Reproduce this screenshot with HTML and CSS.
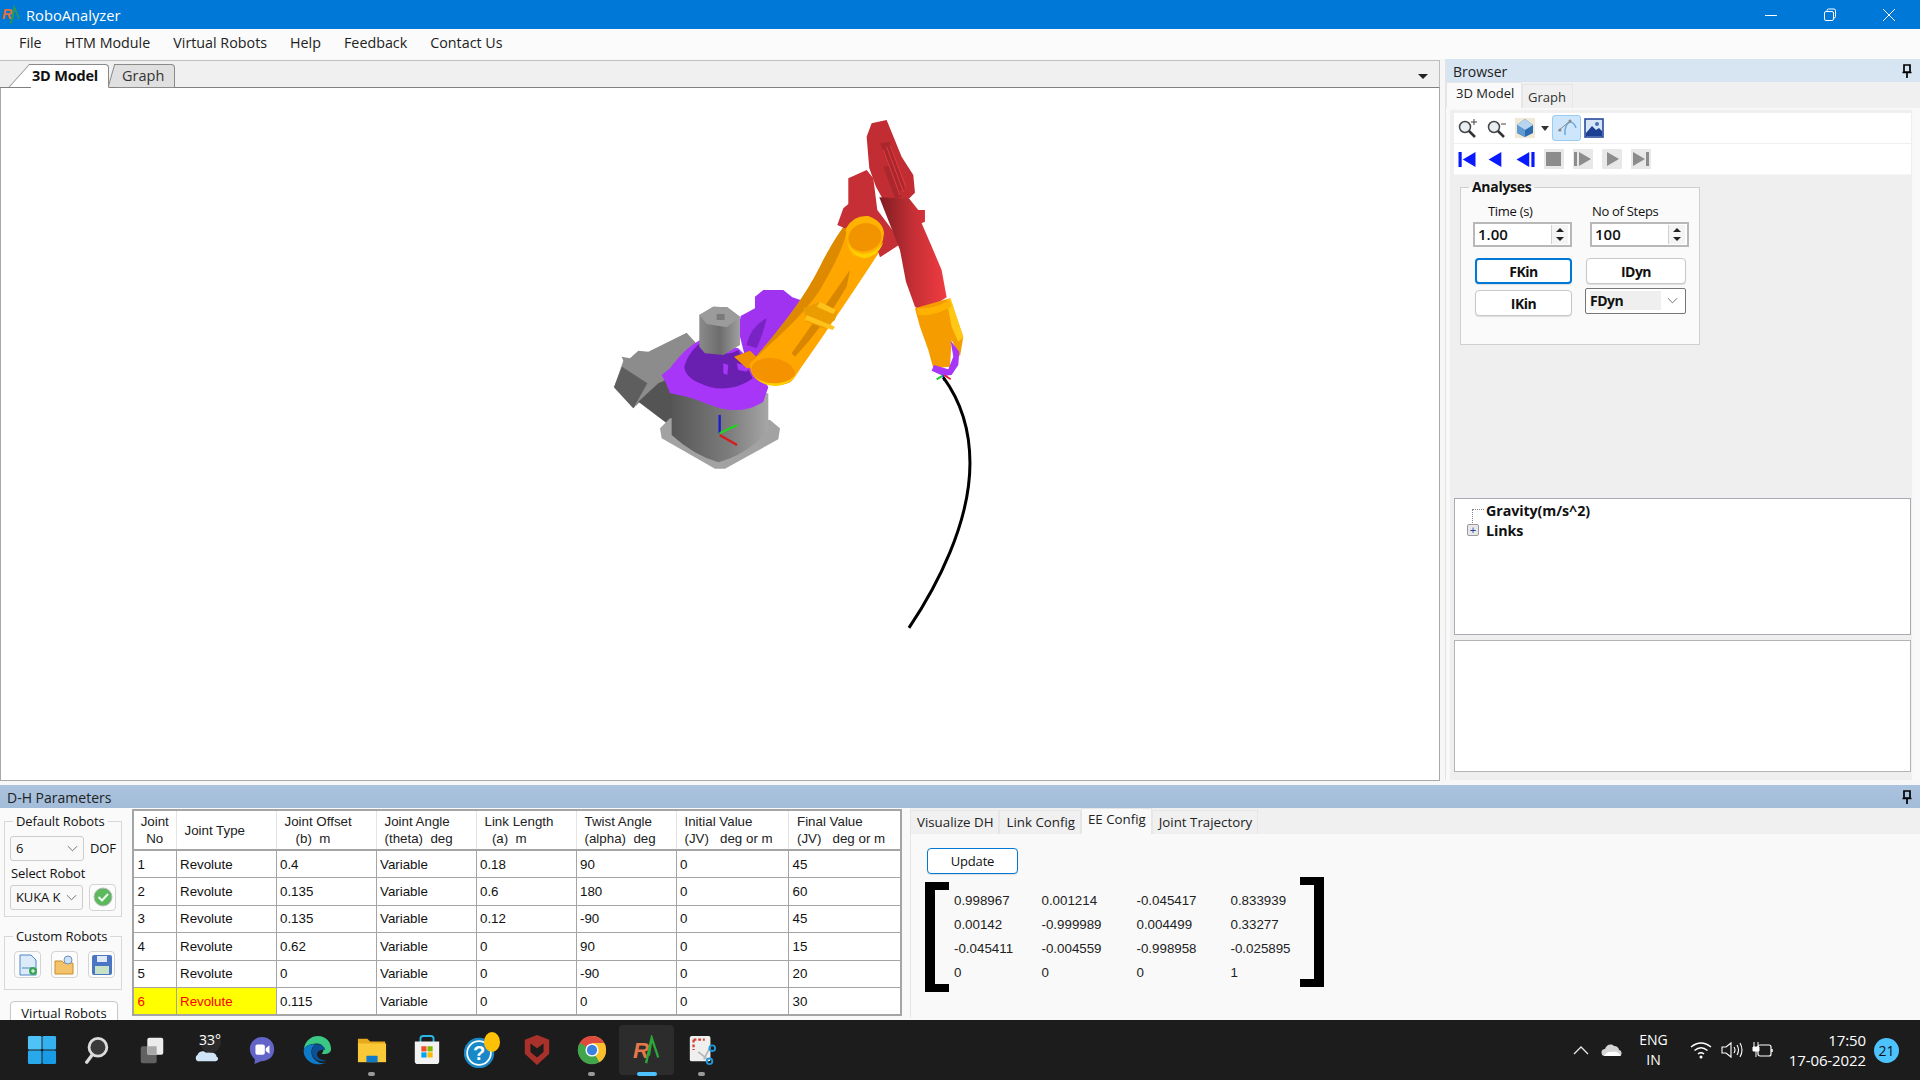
FILE: index.html
```html
<!DOCTYPE html>
<html lang="en">
<head>
    <meta charset="UTF-8">
    <title>RoboAnalyzer</title>
    <link rel="stylesheet" href="styles.css">
</head>
<body>
    <header class="titlebar">
        <svg class="app-icon" viewBox="0 0 20 20">
            <text x="0" y="14" class="ra-r">R</text>
            <path d="M9 19 L13 2 L18 14 M13 2 L11 15" fill="none" stroke="#2e9e3a" stroke-width="1.6"/>
        </svg>
        <span class="app-name">RoboAnalyzer</span>
        <div class="win-controls">
            <svg width="14" height="14" viewBox="0 0 14 14"><path d="M1 7.5H13" stroke="#fff"/></svg>
            <svg width="14" height="14" viewBox="0 0 14 14"><rect x="1.5" y="3.5" width="9" height="9" rx="1.5" fill="none" stroke="#fff"/><path d="M4 3V2.5A1.5 1.5 0 0 1 5.5 1H11A1.5 1.5 0 0 1 12.5 2.5V8.500A1.500 1.500 0 0 1 11 10" fill="none" stroke="#fff"/></svg>
            <svg width="14" height="14" viewBox="0 0 14 14"><path d="M1 1L13 13M13 1L1 13" stroke="#fff"/></svg>
        </div>
    </header>

    <nav class="menubar">
        <span>File</span>
        <span>HTM Module</span>
        <span>Virtual Robots</span>
        <span>Help</span>
        <span>Feedback</span>
        <span>Contact Us</span>
    </nav>

    <div class="workspace">
        <main class="main-view">
            <div class="doc-tabs">
                <span class="doc-tab active">3D Model</span>
                <span class="doc-tab">Graph</span>
                <span class="doc-caret"></span>
            </div>
            <div class="viewport">
                <svg class="scene" viewBox="0 0 1438 690">
                    <defs>
                        <linearGradient id="baseGrey" x1="0" x2="1" y1="0" y2="0">
                            <stop offset="0" stop-color="#565656"/>
                            <stop offset="0.6" stop-color="#7d7d7d"/>
                            <stop offset="1" stop-color="#a6a6a6"/>
                        </linearGradient>
                        <linearGradient id="redArm" x1="0" x2="1" y1="0" y2="0">
                            <stop offset="0" stop-color="#7e1d22"/>
                            <stop offset="0.5" stop-color="#c52f35"/>
                            <stop offset="1" stop-color="#f03c42"/>
                        </linearGradient>
                        <linearGradient id="motorGrey" x1="0" x2="1" y1="0" y2="0">
                            <stop offset="0" stop-color="#8a8a8a"/>
                            <stop offset="0.5" stop-color="#6d6d6d"/>
                            <stop offset="1" stop-color="#a0a0a0"/>
                        </linearGradient>
                    </defs>
                    <g transform="translate(589 11) scale(0.3333)">
                        <!-- gearbox behind the base -->
                        <path d="M72 862L100 782 95 770 120 775 145 752 175 755 290 698 332 745 330 800 215 845 130 925Z" fill="#8c8c8c"/>
                        <path d="M72 862L96 800 172 850 130 925Z" fill="#5e5e5e"/>
                        <path d="M145 905L205 850 330 790 340 900 250 985Z" fill="#545454"/>
                        <!-- base -->
                        <path d="M210 985L240 955 540 960 570 985 565 1018 405 1106 375 1106 215 1015Z" fill="#a2a2a2"/>
                        <path d="M245 880V1005Q310 1065 385 1087 480 1060 535 990V880Z" fill="url(#baseGrey)"/>
                        <!-- purple shoulder -->
                        <path d="M495 590L520 570 580 570 607 592 660 610 590 780 470 790 445 690 452 648 495 625Z" fill="#a033f0"/>
                        <path d="M470 735Q480 680 530 655 520 700 500 745Z" fill="#7a23c4"/>
                        <path d="M215 825L240 805C265 770 295 740 330 720L445 745 500 800 535 862 520 905C490 925 460 932 420 930 380 925 350 910 320 900 290 888 262 885 240 880L228 850Z" fill="#a836f8"/>
                        <path d="M283 802C290 770 310 745 332 728 370 765 410 770 445 750L488 835C440 870 380 875 330 850 300 838 285 820 283 802Z" fill="#691fb0"/>
                        <path d="M400 790L415 795 412 825 400 820ZM440 790L480 800 470 815 445 810Z" fill="#a836f8"/>
                        <!-- motor -->
                        <path d="M328 645L370 620 412 622 450 650V735L400 765 345 760 328 740Z" fill="url(#motorGrey)"/>
                        <path d="M328 645L370 620 412 622 450 650 410 682 350 672Z" fill="#9b9b9b"/>
                        <rect x="380" y="642" width="24" height="18" fill="#7a7a7a"/>
                        <!-- lower orange link -->
                        <path d="M432 770L480 752 530 800 470 805Z" fill="#f09000"/>
                        <path d="M480 790C560 700 640 600 690 500 720 440 745 400 785 350L880 390 872 450C800 560 720 680 632 805 600 860 540 858 510 845 490 835 478 815 480 790Z" fill="#ffa600"/>
                        <path d="M480 790C560 700 640 600 690 500 720 440 745 400 772 365 775 420 730 500 690 570 630 660 550 720 480 790Z" fill="#dd8a00"/>
                        <path d="M605 760Q690 640 780 510L770 560Q700 680 615 770Z" fill="#d98600"/>
                        <path d="M640 625L690 605 742 632 735 660 700 685 650 665Z" fill="#eb9c00"/>
                        <path d="M690 605L738 630 730 642 680 620ZM650 645L735 680 728 690 645 660Z" fill="#ffc21a"/>
                        <ellipse cx="550" cy="815" rx="66" ry="40" transform="rotate(10 550 815)" fill="#f59200"/>
                        <path d="M490 822Q510 858 560 858 610 850 625 815 600 850 550 850 505 848 490 822Z" fill="#ffd000"/>
                        <!-- red shoulder and forearm -->
                        <path d="M742 375L760 325 775 312V235L830 210 850 235 862 330 900 380 935 430 870 472 860 440 800 400Z" fill="#c52f35"/>
                        <path d="M830 110L845 70 890 60 935 170 970 225 975 278 955 298 960 320 880 300 858 260 838 205 835 170Z" fill="#c22d33"/>
                        <path d="M868 292L958 296 985 330 1005 330 1005 365 995 370 1022 432 1055 510 1070 592 1000 636 975 620 948 545 930 450Z" fill="url(#redArm)"/>
                        <path d="M870 130L900 125 945 265 925 275ZM880 200L905 195 935 290 915 295Z" fill="#a9282e"/>
                        <path d="M880 150L930 285M890 140L940 275M900 135L948 262" stroke="#e5393f" stroke-width="3"/>
                        <!-- orange link top joint -->
                        <path d="M768 385Q790 345 835 348 880 365 882 400 880 440 850 465L790 470Q765 430 768 385Z" fill="#ffb300"/>
                        <ellipse cx="825" cy="412" rx="50" ry="42" transform="rotate(-15 825 412)" fill="#f29400"/>
                        <path d="M772 430Q785 470 825 475 870 465 880 425 860 460 820 462 790 460 772 430Z" fill="#ffd000"/>
                        <!-- wrist -->
                        <path d="M975 625L1080 595 1120 710 1110 770 1085 720 1080 800 1030 805 1015 750 990 680Z" fill="#f59c00"/>
                        <path d="M1070 600L1082 595 1120 712 1105 725 1085 680Z" fill="#ffc814"/>
                        <path d="M980 625Q1030 630 1078 600L1085 620Q1030 650 985 645Z" fill="#ffb300"/>
                        <path d="M1025 812L1032 795 1075 808 1090 770 1082 722 1108 755 1105 795 1085 825 1060 828Z" fill="#a836f8"/>
                        <path d="M1040 838L1060 826" stroke="#19d62e" stroke-width="6"/>
                        <path d="M1060 826L1062 842" stroke="#1a1aff" stroke-width="5"/>
                        <path d="M1064 826L1082 838" stroke="#e8141e" stroke-width="5"/>
                        <!-- end effector path -->
                        <path d="M1060 832C1110 900 1140 990 1140 1090 1140 1270 1040 1460 957 1584" fill="none" stroke="#000" stroke-width="9"/>
                        <!-- base frame -->
                        <path d="M389 1000V945" stroke="#1a1ad8" stroke-width="7"/>
                        <path d="M389 1000L442 975" stroke="#1ed61e" stroke-width="7"/>
                        <path d="M389 1005L441 1035" stroke="#d81a1a" stroke-width="7"/>
                    </g>
                </svg>
            </div>
        </main>

        <aside class="browser">
            <div class="dock-title light">
                <span>Browser</span>
                <svg class="pin" viewBox="0 0 12 14"><path d="M3 1H9V8H3ZM1.500 8.500H10.500M6 9V14" fill="none" stroke="#000" stroke-width="1.700"/></svg>
            </div>
            <div class="side-tabs">
                <span class="side-tab active">3D Model</span>
                <span class="side-tab">Graph</span>
            </div>
            <div class="side-body">
                <div class="tool-row">
                    <svg class="tool" viewBox="0 0 20 20"><circle cx="8" cy="9" r="5.500" fill="#e8eef2" stroke="#444" stroke-width="1.500"/><path d="M12 13L18 19" stroke="#333" stroke-width="2.500"/><path d="M17 1V7M14 4H20" stroke="#444"/></svg>
                    <svg class="tool" viewBox="0 0 20 20"><circle cx="8" cy="9" r="5.500" fill="#e8eef2" stroke="#444" stroke-width="1.500"/><path d="M12 13L18 19" stroke="#333" stroke-width="2.500"/><path d="M15 6H20" stroke="#444"/></svg>
                    <svg class="tool cube" viewBox="0 0 20 20"><rect width="20" height="20" fill="#efe9d6"/><path d="M10 1L18 7V15L10 19 2 15V7Z" fill="#2b6cb0"/><path d="M10 1L18 7 10 12 2 7Z" fill="#b8d4ee"/><path d="M2 7L10 12V19L2 15Z" fill="#5f9ad2"/></svg>
                    <span class="tool-caret"></span>
                    <span class="tool-on">
                        <svg class="tool" viewBox="0 0 20 20"><path d="M8 17C7 10 10 5 13 4 16 4 18 7 19 10" fill="none" stroke="#6fa8dc" stroke-width="1.500"/><path d="M1 13L13 3" stroke="#8a8a8a"/><circle cx="13" cy="3" r="1.500" fill="#888"/><circle cx="3" cy="12" r="1.500" fill="#888"/></svg>
                    </span>
                    <svg class="tool" viewBox="0 0 20 20"><rect x="1" y="1" width="18" height="18" fill="#d7e6f6" stroke="#1c3f94" stroke-width="1.500"/><circle cx="13" cy="6" r="2" fill="#4b6fb5"/><path d="M2 15L8 8 12 12 15 10 18 13V18H2Z" fill="#1c3f94"/></svg>
                </div>
                <div class="tool-row media">
                    <svg class="tool" viewBox="0 0 18 16"><path d="M1 1H4V15H1ZM17 1V15L5 8Z" fill="#0a1aff"/></svg>
                    <svg class="tool" viewBox="0 0 18 16"><path d="M14 1V15L2 8Z" fill="#0a1aff"/></svg>
                    <svg class="tool" viewBox="0 0 18 16"><path d="M13 1V15L1 8ZM15 1H18V15H15Z" fill="#0a1aff"/></svg>
                    <svg class="tool off" viewBox="0 0 20 20"><rect width="20" height="20" fill="#e8e8e8"/><rect x="2" y="3" width="15" height="14" fill="#8c8c8c"/></svg>
                    <svg class="tool off" viewBox="0 0 20 20"><rect width="20" height="20" fill="#e8e8e8"/><path d="M1 3H4V17H1ZM6 3V17L18 10Z" fill="#8c8c8c"/></svg>
                    <svg class="tool off" viewBox="0 0 20 20"><rect width="20" height="20" fill="#e8e8e8"/><path d="M5 3V17L17 10Z" fill="#8c8c8c"/></svg>
                    <svg class="tool off" viewBox="0 0 20 20"><rect width="20" height="20" fill="#e8e8e8"/><path d="M2 3V17L14 10ZM15 3H18V17H15Z" fill="#8c8c8c"/></svg>
                </div>

                <fieldset class="analyses">
                    <legend>Analyses</legend>
                    <div class="spin-grid">
                        <div class="spin-field">
                            <label class="time-label">Time (s)</label>
                            <div class="spin"><span>1.00</span><i class="spin-btns"><b class="up"></b><b class="down"></b></i></div>
                        </div>
                        <div class="spin-field">
                            <label class="steps-label">No of Steps</label>
                            <div class="spin"><span>100</span><i class="spin-btns"><b class="up"></b><b class="down"></b></i></div>
                        </div>
                    </div>
                    <div class="run-grid">
                        <button class="btn bold focus">FKin</button>
                        <button class="btn bold">IDyn</button>
                        <button class="btn bold">IKin</button>
                        <div class="fdyn"><span>FDyn</span><svg class="chev" viewBox="0 0 12 7"><path d="M1 1L6 6 11 1" fill="none" stroke="#666"/></svg></div>
                    </div>
                </fieldset>

                <div class="spacer"></div>

                <div class="tree">
                    <div class="tree-row"><span class="tree-line"></span>Gravity(m/s^2)</div>
                    <div class="tree-row"><span class="tree-plus">+</span>Links</div>
                </div>
                <div class="log"></div>
            </div>
        </aside>
    </div>

    <section class="dh-dock">
        <div class="dock-title dark">
            <span>D-H Parameters</span>
            <svg class="pin" viewBox="0 0 12 14"><path d="M3 1H9V8H3ZM1.500 8.500H10.500M6 9V14" fill="none" stroke="#000" stroke-width="1.700"/></svg>
        </div>
        <div class="dh-body">
            <div class="robot-col">
                <fieldset class="group default-robots">
                    <legend>Default Robots</legend>
                    <div class="form-row first">
                        <div class="combo"><span>6</span><svg class="chev" viewBox="0 0 12 7"><path d="M1 1L6 6 11 1" fill="none" stroke="#666"/></svg></div>
                        <span class="dof">DOF</span>
                    </div>
                    <div class="select-label">Select Robot</div>
                    <div class="form-row">
                        <div class="combo"><span>KUKA K</span><svg class="chev" viewBox="0 0 12 7"><path d="M1 1L6 6 11 1" fill="none" stroke="#666"/></svg></div>
                        <button class="icon-btn">
                            <svg viewBox="0 0 20 20" width="20" height="20"><circle cx="10" cy="10" r="9" fill="#5cb85c" stroke="#bbb"/><path d="M5.500 10L9 13.500 15 7" fill="none" stroke="#e8f8e8" stroke-width="2.200"/></svg>
                        </button>
                    </div>
                </fieldset>
                <fieldset class="group custom-robots">
                    <legend>Custom Robots</legend>
                    <div class="custom-row">
                        <button class="icon-btn">
                            <svg viewBox="0 0 22 22" width="22" height="22"><path d="M3 1H14L19 6V21H3Z" fill="#dcebfa" stroke="#4a86c8"/><path d="M5 14H15" stroke="#4a86c8"/><circle cx="16" cy="17" r="4" fill="#3aa655"/><path d="M14 17H18M16 15V19" stroke="#fff"/></svg>
                        </button>
                        <button class="icon-btn">
                            <svg viewBox="0 0 22 22" width="22" height="22"><path d="M1 7H8L10 9H19V20H1Z" fill="#f4c26b" stroke="#c98f2c"/><circle cx="14" cy="6" r="4" fill="#cfe2f5" stroke="#6b93bf"/></svg>
                        </button>
                        <button class="icon-btn">
                            <svg viewBox="0 0 22 22" width="22" height="22"><rect x="1" y="1" width="20" height="20" rx="2" fill="#4a76c4"/><rect x="6" y="2" width="10" height="6" fill="#dfe9f7"/><rect x="4" y="12" width="14" height="8" fill="#c8e2c4"/></svg>
                        </button>
                    </div>
                </fieldset>
                <button class="btn virtual">Virtual Robots</button>
            </div>

            <div class="table-wrap">
                <table class="dh-table">
                    <colgroup>
                        <col class="c-no"><col class="c-type"><col class="c-wide"><col class="c-angle"><col class="c-wide"><col class="c-wide"><col class="c-init"><col class="c-init">
                    </colgroup>
                    <thead>
                        <tr>
                            <th class="center">Joint<br>No</th>
                            <th class="indent">Joint Type</th>
                            <th>Joint Offset<br>   (b)  m</th>
                            <th>Joint Angle<br>(theta)  deg</th>
                            <th>Link Length<br>  (a)  m</th>
                            <th>Twist Angle<br>(alpha)  deg</th>
                            <th>Initial Value<br>(JV)   deg or m</th>
                            <th>Final Value<br>(JV)   deg or m</th>
                        </tr>
                    </thead>
                    <tbody>
                        <tr><td>1</td><td>Revolute</td><td>0.4</td><td>Variable</td><td>0.18</td><td>90</td><td>0</td><td>45</td></tr>
                        <tr><td>2</td><td>Revolute</td><td>0.135</td><td>Variable</td><td>0.6</td><td>180</td><td>0</td><td>60</td></tr>
                        <tr><td>3</td><td>Revolute</td><td>0.135</td><td>Variable</td><td>0.12</td><td>-90</td><td>0</td><td>45</td></tr>
                        <tr><td>4</td><td>Revolute</td><td>0.62</td><td>Variable</td><td>0</td><td>90</td><td>0</td><td>15</td></tr>
                        <tr><td>5</td><td>Revolute</td><td>0</td><td>Variable</td><td>0</td><td>-90</td><td>0</td><td>20</td></tr>
                        <tr><td class="flag">6</td><td class="flag">Revolute</td><td>0.115</td><td>Variable</td><td>0</td><td>0</td><td>0</td><td>30</td></tr>
                    </tbody>
                </table>
            </div>

            <div class="config">
                <div class="config-tabs">
                    <span class="config-tab">Visualize DH</span>
                    <span class="config-tab">Link Config</span>
                    <span class="config-tab active">EE Config</span>
                    <span class="config-tab">Joint Trajectory</span>
                </div>
                <div class="config-body">
                    <button class="btn focus update">Update</button>
                    <div class="matrix-row">
                        <div class="bracket left"></div>
                        <div class="matrix">
                            <span>0.998967</span><span>0.001214</span><span>-0.045417</span><span>0.833939</span>
                            <span>0.00142</span><span>-0.999989</span><span>0.004499</span><span>0.33277</span>
                            <span>-0.045411</span><span>-0.004559</span><span>-0.998958</span><span>-0.025895</span>
                            <span>0</span><span>0</span><span>0</span><span>1</span>
                        </div>
                        <div class="bracket right"></div>
                    </div>
                </div>
            </div>
        </div>
    </section>

    <footer class="taskbar">
        <div class="task-icons">
            <span class="task"><svg viewBox="0 0 32 32"><rect x="1" y="1" width="14.500" height="14.500" rx="1.500" fill="#4fc3f7"/><rect x="16.500" y="1" width="14.500" height="14.500" rx="1.500" fill="#35b1f0"/><rect x="1" y="16.500" width="14.500" height="14.500" rx="1.500" fill="#29a8ec"/><rect x="16.500" y="16.500" width="14.500" height="14.500" rx="1.500" fill="#1a9be6"/></svg></span>
            <span class="task"><svg viewBox="0 0 32 32"><circle cx="17" cy="13" r="9.500" fill="#3a3a3a" stroke="#dcdcdc" stroke-width="3"/><path d="M11 21L5 29" stroke="#dcdcdc" stroke-width="3.500" stroke-linecap="round"/></svg></span>
            <span class="task"><svg viewBox="0 0 32 32"><rect x="4" y="12" width="17" height="18" rx="2" fill="#616161"/><rect x="11" y="3" width="17" height="18" rx="2" fill="#ececec"/><rect x="11" y="12" width="10" height="9" fill="#a8a8a8"/></svg></span>
            <span class="task weather"><svg viewBox="0 0 32 32"><path d="M6 28A4 4 0 0 1 6 21C7 17 13 16 15 19 20 17 27 20 26 23 29 24 28 28 25 28Z" fill="#cfe4f7"/><circle cx="20" cy="8" r="11" fill="#2b2b2b"/></svg><span class="temp">33°</span></span>
            <span class="task"><svg viewBox="0 0 32 32"><path d="M16 2C24 2 29 8 29 15 29 23 23 28 15 28L8 31 8.500 26C5 23 3 19 3 15 3 8 9 2 16 2Z" fill="#6264c8"/><rect x="9" y="10" width="10" height="11" rx="2" fill="#fff"/><path d="M20 14L24 11V20L20 17Z" fill="#fff"/></svg></span>
            <span class="task"><svg viewBox="0 0 32 32"><path d="M2 15C3 6 10 1 17 1 26 1 31 8 31 15 31 20 25 21 21 20 25 16 23 9 16 9 8 9 4 12 2 15Z" fill="#3bc884"/><path d="M2 15C4 11 9 9 14 10 8 14 9 24 16 28 20 31 24 30 26 29 21 32 14 32 9 29 4 26 1 21 2 15Z" fill="#0f7ac7"/><path d="M14 10C9 14 9 23 16 27 21 29 25 28 26 27 21 27 16 25 16 20 17 16 21 15 25 16 24 11 19 9 14 10Z" fill="#0b4f94"/></svg></span>
            <span class="task dot"><svg viewBox="0 0 32 32"><path d="M1 4H11L14 7H30V12H1Z" fill="#e7a91d"/><path d="M1 9H31V29H1Z" fill="#fac938"/><rect x="10" y="22" width="12" height="7" rx="1" fill="#0f7ac7"/></svg></span>
            <span class="task"><svg viewBox="0 0 32 32"><path d="M9 8V4Q9 1 12 1H20Q23 1 23 4V8" fill="none" stroke="#29b6e8" stroke-width="2"/><path d="M3 7H29V28Q29 31 26 31H6Q3 31 3 28Z" fill="#f2f2f2"/><rect x="10" y="12" width="5.500" height="5.500" fill="#f25022"/><rect x="16.500" y="12" width="5.500" height="5.500" fill="#7fba00"/><rect x="10" y="18.500" width="5.500" height="5.500" fill="#00a4ef"/><rect x="16.500" y="18.500" width="5.500" height="5.500" fill="#ffb900"/></svg></span>
            <span class="task help"><svg viewBox="0 0 36 36"><circle cx="15" cy="21" r="14" fill="#fff" stroke="#1888c8" stroke-width="2.500"/><circle cx="15" cy="21" r="11" fill="#1888c8"/><text x="15" y="28" class="help-q">?</text><ellipse cx="28" cy="10" rx="8" ry="10" fill="#ffc107"/></svg></span>
            <span class="task"><svg viewBox="0 0 32 32"><path d="M3 5L16 0 29 5V20L16 32 3 20Z" fill="#a8322b"/><path d="M9 9L16 14 23 9V18L16 24 9 18Z" fill="#1c1c1c"/></svg></span>
            <span class="task dot"><svg viewBox="0 0 32 32"><circle cx="16" cy="16" r="15" fill="#dd4b3e"/><path d="M16 16L29 23.500A15 15 0 0 1 10 30Z" fill="#3fa64c"/><path d="M16 16L3 8.500A15 15 0 0 0 10 30Z" fill="#3fa64c"/><path d="M16 1A15 15 0 0 1 31 16 15 15 0 0 1 24 29L16 16Z" fill="#fbc02d"/><path d="M3 8.500A15 15 0 0 1 29 8.500H16Z" fill="#dd4b3e"/><circle cx="16" cy="16" r="7" fill="#fff"/><circle cx="16" cy="16" r="5.500" fill="#3b82e0"/></svg></span>
            <span class="task running"><svg viewBox="0 0 32 32"><text x="1" y="24" class="ra-big">R</text><path d="M15 30L21 3 28 24M21 3L18 22" fill="none" stroke="#2aa838" stroke-width="2.500"/></svg></span>
            <span class="task dot"><svg viewBox="0 0 32 32"><rect x="3" y="1" width="22" height="27" rx="2" fill="#efefef"/><path d="M7 5H19M7 5V16" stroke="#d8412f" stroke-width="2.500" stroke-dasharray="3 2"/><path d="M12 18L22 26 M24 14L18 26" stroke="#b8b8b8" stroke-width="2"/><circle cx="24" cy="28" r="3" fill="none" stroke="#2096d8" stroke-width="2"/><circle cx="27" cy="14" r="3" fill="none" stroke="#2096d8" stroke-width="2"/></svg></span>
        </div>
        <div class="tray">
            <svg class="tray-caret" width="16" height="10" viewBox="0 0 16 10"><path d="M1 9L8 2 15 9" fill="none" stroke="#e8e8e8" stroke-width="1.300"/></svg>
            <svg class="tray-cloud" width="22" height="14" viewBox="0 0 22 14"><path d="M4 13A3.500 3.500 0 0 1 4 6C5 2 10 0 13 3 16 3 18 5 18 7 21 7 22 13 18 13Z" fill="#d4d4d4"/><path d="M3 13Q6 8 11 9 16 7 20 13Z" fill="#fff"/></svg>
            <div class="lang">ENG<br>IN</div>
            <svg class="tray-wifi" width="22" height="18" viewBox="0 0 22 18"><path d="M1 6Q11 -2 21 6M4.500 9.500Q11 4 17.500 9.500M8 13Q11 10.500 14 13" fill="none" stroke="#fff" stroke-width="1.400"/><circle cx="11" cy="16" r="1.500" fill="#fff"/></svg>
            <svg class="tray-sound" width="22" height="18" viewBox="0 0 22 18"><path d="M1 6H5L10 2V16L5 12H1Z" fill="none" stroke="#fff" stroke-width="1.100"/><path d="M13 6Q15 9 13 12M16 4Q19 9 16 14M19 2Q23 9 19 16" fill="none" stroke="#fff" stroke-width="1.100"/></svg>
            <svg class="tray-batt" width="22" height="18" viewBox="0 0 22 18"><rect x="6" y="4" width="13" height="11" rx="2" fill="none" stroke="#fff" stroke-width="1.200"/><path d="M20 8V11" stroke="#fff" stroke-width="1.500"/><path d="M1 6H7V10H1ZM2 1V6M6 1V6M4 10V16" fill="#fff" stroke="#fff"/></svg>
            <div class="clock">17:50<br>17-06-2022</div>
            <span class="notify">21</span>
        </div>
    </footer>
</body>
</html>
```

FILE: styles.css
```css
* {
    box-sizing: border-box;
}
html, body {
    height: 100%;
}
body {
    margin: 0;
    width: 1920px;
    height: 1080px;
    overflow: hidden;
    display: flex;
    flex-direction: column;
    font-family: "Liberation Sans", Arial, sans-serif;
    font-size: 13.33px;
    color: #111;
    background: #f0f0f0;
}
button {
    font: inherit;
    color: inherit;
}
fieldset {
    margin: 0;
    min-width: 0;
}

/* title bar + menu */
.titlebar {
    height: 29px;
    flex: none;
    display: flex;
    align-items: center;
    background: #0078d7;
    color: #fff;
    font-family: "Open Sans", sans-serif;
    font-size: 14.7px;
    padding-left: 2px;
}
.app-icon {
    width: 19px;
    height: 20px;
}
.ra-r {
    font: italic bold 15px "Liberation Sans", sans-serif;
    fill: #e0703c;
}
.app-name {
    margin-left: 5px;
}
.win-controls {
    margin-left: auto;
    display: flex;
    gap: 45px;
    padding-right: 24px;
}
.menubar {
    height: 30px;
    flex: none;
    display: flex;
    align-items: center;
    padding: 0 0 3px 19px;
    gap: 23px;
    background: #fbfbfb;
    font-family: "Open Sans", sans-serif;
    font-size: 14.3px;
    color: #222;
}

/* workspace */
.workspace {
    height: 726px;
    flex: none;
    display: grid;
    grid-template-columns: 1440px 475px;
    column-gap: 5px;
    background: #f7f7f7;
}
.main-view {
    display: flex;
    flex-direction: column;
    height: 721px;
    margin-top: 1px;
}
.doc-tabs {
    height: 28px;
    flex: none;
    display: flex;
    align-items: flex-end;
    position: relative;
    padding-left: 31px;
    background: #f0f0f0;
    border-top: 1px solid #c0c0c0;
    border-right: 1px solid #bbb;
    border-bottom: 1px solid #808080;
    font-family: "Open Sans", sans-serif;
    font-size: 14.5px;
}
.doc-tab {
    position: relative;
    height: 24px;
    margin-bottom: -1px;
    background: #e0e0e0;
    border: 1px solid #8a8a8a;
    border-left: 0;
    border-radius: 0 4px 0 0;
    color: #333;
    line-height: 22px;
}
.doc-tab::before {
    content: "";
    position: absolute;
    left: -4px;
    top: -1px;
    bottom: 0;
    width: 8px;
    transform: skewX(-16deg);
    background: inherit;
    border-left: 1px solid #8a8a8a;
    border-top: 1px solid #8a8a8a;
}
.doc-tab.active {
    width: 78px;
    padding-left: 1px;
    font-weight: bold;
    color: #111;
    background: #fff;
    border-bottom-color: #fff;
    letter-spacing: -0.2px;
    z-index: 1;
    white-space: nowrap;
}
.doc-tab.active::before {
    left: -12px;
    width: 24px;
    transform: skewX(-42deg);
    z-index: -1;
}
.doc-tab:not(.active) {
    width: 60px;
    margin-left: 6px;
    padding-left: 7px;
}
.doc-caret {
    position: absolute;
    right: 11px;
    top: 13px;
    border: 5px solid transparent;
    border-top: 5px solid #222;
    border-left-width: 5.500px;
    border-right-width: 5.500px;
}
.viewport {
    flex: 1;
    background: #fff;
    border: 1px solid #a8a8a8;
    border-top: 0;
}
.scene {
    display: block;
    width: 100%;
    height: 100%;
}

/* dock titles */
.dock-title {
    height: 23px;
    flex: none;
    display: flex;
    align-items: center;
    justify-content: space-between;
    padding: 1px 7px 0 7px;
    font-family: "Open Sans", sans-serif;
    font-size: 14px;
    color: #222;
}
.dock-title.light {
    background: #d7e4f2;
}
.dock-title.dark {
    background: linear-gradient(#abc3de, #a2bcd9);
}
.pin {
    width: 12px;
    height: 14px;
}

/* browser panel */
.browser {
    display: flex;
    flex-direction: column;
    height: 721px;
    background: #f9f9f9;
    border-left: 1px solid #e3e3e3;
}
.side-tabs {
    height: 26px;
    flex: none;
    display: flex;
    align-items: flex-end;
    background: #f0f0f0;
    font-family: "Open Sans", sans-serif;
    font-size: 13px;
    color: #333;
}
.side-tab {
    height: 24px;
    padding: 3px 6px 0 5px;
    background: #f0f0f0;
    border: 1px solid #e6e6e6;
    border-bottom: 0;
}
.side-tab.active {
    width: 76px;
    height: 26px;
    padding: 1px 0 0 9px;
    background: #fafafa;
    color: #222;
}
.side-body {
    flex: 1;
    display: flex;
    flex-direction: column;
    margin: 1px 4px 0;
    padding: 3px 1px 8px 4px;
    background: #efefef;
    border: 1px solid #f8f8f8;
    border-width: 1px 4px 0 0;
}
.tool-row {
    height: 30px;
    flex: none;
    display: flex;
    align-items: center;
    gap: 9px;
    padding-left: 3px;
    background: #fff;
}
.tool-row.media {
    height: 31px;
    margin-top: 1px;
    gap: 9px;
    border-bottom: 1px solid #f7f7f7;
}
.tool {
    width: 20px;
    height: 20px;
    flex: none;
}
.media .tool {
    height: 17px;
}
.media .tool.off {
    height: 20px;
}
.tool-caret {
    margin-left: -3px;
    margin-right: -6px;
    border: 4.500px solid transparent;
    border-top: 5px solid #333;
    margin-top: 5px;
}
.tool-on {
    width: 29px;
    height: 26px;
    display: flex;
    align-items: center;
    justify-content: center;
    background: #cde6fb;
    border: 1px solid #98ccf3;
    border-radius: 3px;
    margin-right: -6px;
}

/* analyses box */
.analyses {
    width: 240px;
    height: 166px;
    margin: 4px 0 0 6px;
    padding: 0 9px 0 12px;
    background: #fafafa;
    border: 1px solid #cfcfcf;
    flex: none;
}
.analyses legend {
    padding: 0 3px;
    margin-left: -4px;
    font-family: "Open Sans", sans-serif;
    font-weight: bold;
    font-size: 14px;
    letter-spacing: -0.3px;
    line-height: 16px;
}
.spin-grid {
    display: grid;
    grid-template-columns: 99px 99px;
    column-gap: 18px;
    margin-top: 7px;
}
.spin-field label {
    display: block;
    height: 20px;
    font-family: "Open Sans", sans-serif;
    font-size: 13px;
    letter-spacing: -0.3px;
}
.time-label {
    padding-left: 15px;
}
.steps-label {
    padding-left: 2px;
}
.spin {
    height: 25px;
    display: flex;
    align-items: center;
    justify-content: space-between;
    padding: 0 2px 2px 3px;
    background: #fff;
    border: 2px solid #b8b8b8;
    font-family: "Open Sans", sans-serif;
    font-weight: 600;
    font-size: 15px;
}
.spin-btns {
    width: 17px;
    height: 19px;
    margin-top: 2px;
    display: flex;
    flex-direction: column;
    justify-content: space-around;
    align-items: center;
    background: #f4f4f4;
    border-left: 1px solid #d0d0d0;
}
.up, .down {
    border: 4px solid transparent;
}
.up {
    border-bottom: 4px solid #222;
    border-top-width: 0;
}
.down {
    border-top: 4px solid #222;
    border-bottom-width: 0;
}
.run-grid {
    display: grid;
    grid-template-columns: 97px 100px;
    grid-template-rows: 26px 26px;
    column-gap: 14px;
    row-gap: 6px;
    margin: 11px 0 0 2px;
}
.btn {
    background: #fff;
    border: 1px solid #c8c8c8;
    border-radius: 4px;
    box-shadow: 0 1px 1px #ddd;
    padding: 0;
    font-family: "Open Sans", sans-serif;
    font-size: 14px;
}
.btn.bold {
    font-weight: bold;
    letter-spacing: -0.5px;
}
.btn.focus {
    border: 2px solid #0078d7;
}
.fdyn {
    height: 26px;
    margin-top: -2px;
    display: flex;
    align-items: center;
    justify-content: space-between;
    padding: 0 7px 2px 4px;
    margin-left: -1px;
    background: #fff;
    border: 1px solid #777;
    border-radius: 2px;
    font-family: "Open Sans", sans-serif;
    font-weight: bold;
    font-size: 14px;
    letter-spacing: -0.5px;
}
.fdyn span {
    width: 71px;
    background: #efefef;
}
.chev {
    width: 11px;
    height: 7px;
}
.spacer {
    flex: 1;
}

/* tree + log */
.tree {
    height: 137px;
    flex: none;
    padding: 1px 0 0 12px;
    background: #fff;
    border: 1.500px solid #a8abb4;
    font-family: "Open Sans", sans-serif;
    font-size: 14.3px;
    font-weight: bold;
    letter-spacing: -0.1px;
}
.tree-row {
    height: 20px;
    display: flex;
    align-items: center;
    padding-left: 19px;
    position: relative;
}
.tree-line {
    position: absolute;
    left: 5px;
    top: 9px;
    width: 12px;
    height: 14px;
    border-left: 1px dotted #888;
    border-top: 1px dotted #888;
}
.tree-plus {
    position: absolute;
    left: 0;
    top: 4px;
    width: 12px;
    height: 12px;
    text-align: center;
    font: 11px/10px "Liberation Sans", sans-serif;
    color: #2a3f9d;
    background: #e8e8e8;
    border: 1px solid #999;
    border-radius: 2px;
}
.log {
    height: 132px;
    flex: none;
    margin-top: 5px;
    background: #fff;
    border: 1.500px solid #b4b4b4;
}

/* D-H dock */
.dh-dock {
    height: 235px;
    flex: none;
    display: flex;
    flex-direction: column;
    background: #f9f9f9;
    overflow: hidden;
}
.dh-body {
    flex: 1;
    display: flex;
    min-height: 0;
}
.robot-col {
    width: 132px;
    flex: none;
    padding: 5px 10px 0 4px;
    background: #fafafa;
    font-family: "Open Sans", sans-serif;
    font-size: 13px;
    letter-spacing: -0.1px;
}
.group {
    width: 118px;
    padding: 0 5px;
    border: 1px solid #d8d8d8;
}
.group legend {
    padding: 0 3px;
    margin-left: 3px;
    line-height: 16px;
}
.default-robots {
    height: 104px;
}
.custom-robots {
    height: 62px;
    margin-top: 11px;
}
.form-row {
    display: flex;
    align-items: center;
    gap: 6px;
    height: 26px;
}
.form-row.first {
    margin-top: 6px;
}
.combo {
    width: 74px;
    height: 25px;
    display: flex;
    align-items: center;
    justify-content: space-between;
    padding: 0 5px;
    background: #f9f9f9;
    border: 1px solid #cdcdcd;
    border-radius: 3px;
    overflow: hidden;
}
.combo span {
    width: 46px;
    overflow: hidden;
    white-space: nowrap;
}
.select-label {
    height: 23px;
    padding: 3px 0 0 1px;
}
.icon-btn {
    width: 27px;
    height: 27px;
    padding: 0;
    display: flex;
    align-items: center;
    justify-content: center;
    background: #fcfcfc;
    border: 1px solid #d4d4d4;
    border-radius: 4px;
}
.custom-row {
    display: flex;
    justify-content: space-between;
    padding: 7px 1px 0 4px;
}
.btn.virtual {
    display: block;
    width: 108px;
    height: 30px;
    margin: 11px 0 0 6px;
    font-size: 13px;
    text-align: center;
    padding-bottom: 7px;
}
.table-wrap {
    width: 771px;
    flex: none;
    height: 207px;
    margin-top: 1px;
}
.dh-table {
    width: 768px;
    table-layout: fixed;
    border-collapse: collapse;
    background: #fff;
    border: 2px solid #a5a5a5;
}
.c-no { width: 43px; }
.c-type { width: 100px; }
.c-wide { width: 100px; }
.c-angle { width: 100px; }
.c-init { width: 112.500px; }
.dh-table th {
    height: 40px;
    padding: 0 0 0 8px;
    font-weight: normal;
    text-align: left;
    white-space: pre;
    line-height: 17px;
    color: #222;
    border-right: 1px solid #e4e4e4;
    border-bottom: 2px solid #a5a5a5;
}
.dh-table th.center {
    padding: 0;
    text-align: center;
}
.dh-table th.indent {
    padding-left: 8px;
}
.dh-table td {
    height: 27.500px;
    padding: 0 0 0 3.500px;
    border: 1.500px solid #a5a5a5;
}
.dh-table td.flag {
    background: #ff0;
    color: #f00;
}

/* config tabs */
.config {
    flex: 1;
    margin: 0 0 2px 7px;
    display: flex;
    flex-direction: column;
    background: #f0f0f0;
}
.config-tabs {
    height: 26px;
    flex: none;
    display: flex;
    align-items: flex-end;
    padding-left: 0;
    font-family: "Open Sans", sans-serif;
    font-size: 13.3px;
    color: #222;
}
.config-tab {
    height: 24px;
    padding: 2px 5px 0 6px;
    border: 1px solid #e6e6e6;
    border-bottom: 0;
    background: #f0f0f0;
    white-space: nowrap;
}
.config-tab.active {
    height: 26px;
    padding-top: 1px;
    background: #f9f9f9;
}
.config-body {
    flex: 1;
    padding: 14px 0 0 16px;
    background: #f9f9f9;
    border-left: 1px solid #e6e6e6;
}
.update {
    display: block;
    width: 91px;
    height: 26px;
    font-size: 13px;
    letter-spacing: -0.2px;
}
.btn.update.focus {
    border-width: 1.500px;
}
.matrix-row {
    display: flex;
    align-items: flex-start;
}
.bracket {
    width: 24px;
    height: 110px;
    flex: none;
    border: 8px solid #000;
}
.bracket.left {
    margin: 8px 0 0 -2px;
    border-left-width: 10px;
    border-right: 0;
}
.bracket.right {
    margin: 3px 0 0 20px;
    border-right-width: 10px;
    border-left: 0;
}
.matrix {
    width: 326px;
    display: grid;
    grid-template-columns: 87.500px 95px 94px 50px;
    grid-template-rows: 25px 24.500px 23px 24px;
    align-items: center;
    margin: 13.500px 0 0 5px;
    white-space: nowrap;
    color: #222;
}

/* taskbar */
.taskbar {
    height: 60px;
    flex: none;
    display: flex;
    align-items: center;
    padding-left: 14px;
    background: #1c1c1c;
    color: #fff;
    font-family: "Open Sans", sans-serif;
    font-size: 14px;
}
.task-icons {
    display: flex;
}
.task {
    position: relative;
    width: 55px;
    height: 50px;
    display: flex;
    align-items: center;
    justify-content: center;
}
.task svg {
    width: 30px;
    height: 30px;
}
.task.help svg {
    width: 36px;
    height: 36px;
}
.task.dot::after, .task.running::after {
    content: "";
    position: absolute;
    left: 50%;
    bottom: -1px;
    width: 7px;
    height: 4px;
    margin-left: -3.500px;
    border-radius: 2px;
    background: #9a9a9a;
}
.task.running {
    background: #2c2c2c;
    border-radius: 4px;
}
.task.running::after {
    width: 20px;
    margin-left: -10px;
    background: #4cc2ff;
}
.temp {
    position: absolute;
    left: 20px;
    top: 6px;
    font-size: 14px;
    line-height: 18px;
}
.help-q {
    font: bold 20px "Liberation Sans", sans-serif;
    fill: #fff;
    text-anchor: middle;
}
.ra-big {
    font: italic bold 24px "Liberation Sans", sans-serif;
    fill: #e5774a;
}
.tray {
    margin-left: auto;
    display: flex;
    align-items: center;
    padding-right: 21px;
}
.tray-caret {
    margin-right: 12px;
}
.tray-cloud {
    margin-right: 15.500px;
}
.lang, .clock {
    line-height: 20px;
}
.lang {
    width: 30px;
    text-align: center;
    margin-right: 21.500px;
}
.tray-sound, .tray-batt {
    margin-left: 9px;
}
.clock {
    width: 78px;
    font-size: 15px;
    text-align: right;
    margin-left: 14px;
    letter-spacing: -0.1px;
}
.notify {
    width: 25px;
    height: 25px;
    margin-left: 8px;
    border-radius: 50%;
    background: #4cc2ff;
    color: #111;
    text-align: center;
    line-height: 25px;
}
```
